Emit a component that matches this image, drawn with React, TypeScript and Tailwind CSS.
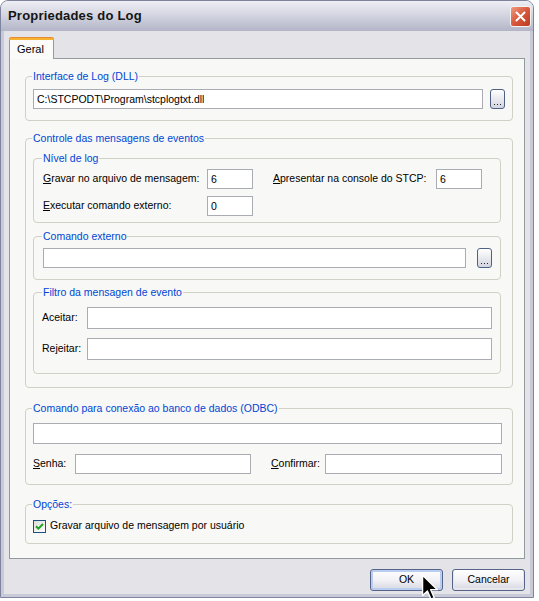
import React from "react";

function Input({ className = "", value = "" }: { className?: string; value?: string }) {
  return (
    <div
      className={
        "bg-white border border-[#a9adb3] flex items-center pl-[3px] leading-none whitespace-nowrap overflow-hidden " +
        className
      }
    >
      {value}
    </div>
  );
}

function Browse() {
  return (
    <div className="shrink-0 w-[15px] h-[20px] rounded-[3px] border border-[#4d6185] bg-gradient-to-b from-white to-[#d3d5e0] flex items-end justify-center pb-[3px]">
      <svg width="7" height="1" viewBox="0 0 7 1">
        <rect x="0" y="0" width="1" height="1" fill="#222" />
        <rect x="3" y="0" width="1" height="1" fill="#222" />
        <rect x="6" y="0" width="1" height="1" fill="#222" />
      </svg>
    </div>
  );
}

function Group({
  label,
  legendClass = "ml-[6px]",
  className = "",
  children,
}: {
  label: string;
  legendClass?: string;
  className?: string;
  children?: React.ReactNode;
}) {
  return (
    <fieldset className={"border border-[#d0d0c4] rounded-[4px] min-w-0 " + className}>
      <legend className={"px-[1px] leading-[13px] text-[#0046d5] " + legendClass}>{label}</legend>
      {children}
    </fieldset>
  );
}

function Button({ label, def = false }: { label: string; def?: boolean }) {
  return (
    <div
      className={
        "w-[73px] h-[22px] rounded-[3px] border border-[#56648a] bg-gradient-to-b from-white via-[#f2f2f6] to-[#d6d7e1] flex items-center justify-center " +
        (def ? "shadow-[inset_0_0_0_2px_#b8cdf0]" : "shadow-[inset_0_-1px_0_1px_#e6e6ee]")
      }
    >
      {label}
    </div>
  );
}

export default function App() {
  return (
    <div className="w-[539px] h-[601px] bg-white relative font-['Liberation_Sans',Arial,sans-serif] text-[10.5px] text-black">
      <div className="w-[534px] h-[598px] flex flex-col rounded-t-[8px] border border-[#7f849e] bg-[#e4e3e8] overflow-hidden">
        {/* title bar */}
        <div className="h-[30px] shrink-0 flex items-center justify-between pl-[7px] pr-[2px] bg-gradient-to-b from-[#eeeef4] via-[#d2d3df] to-[#b3b5c8]">
          <span className="font-bold text-[13px] text-[#151515] tracking-[0.2px]">Propriedades do Log</span>
          <div className="w-[21px] h-[21px] rounded-[3px] border border-[#f4f4f4] bg-gradient-to-br from-[#ec9a80] via-[#d9573b] to-[#bb3a20] flex items-center justify-center">
            <svg width="11" height="11" viewBox="0 0 11 11">
              <path d="M1.5 1.5 L9.5 9.5 M9.5 1.5 L1.5 9.5" stroke="white" strokeWidth="2" strokeLinecap="round" />
            </svg>
          </div>
        </div>

        {/* body */}
        <div className="flex-1 flex flex-col border-x-[3px] border-b-[3px] border-[#c9cad8] pl-[5px] pr-[5px] pt-[6px]">
          {/* tabs */}
          <div className="flex h-[21px]">
            <div className="relative z-10 w-[45px] h-[22px] bg-[#fbfbfa] border-x border-[#919b9c] rounded-t-[3px] flex flex-col">
              <div className="h-[3px] -mx-[1px] rounded-t-[3px] bg-[#f7b232] border-t border-[#e68b2c]" />
              <div className="flex-1 pl-[7px] flex items-center text-[11px]">Geral</div>
            </div>
          </div>

          {/* panel */}
          <div className="w-[516px] border border-[#919b9c] bg-[#f8f8f6] pt-[11px] pl-[15px] pr-[11px] pb-[14px] flex flex-col">
            {/* Interface de Log */}
            <Group label="Interface de Log (DLL)">
              <div className="pl-[7px] pr-[7px] pb-[11px]">
                <div className="flex items-center gap-[7px] mt-[6px]">
                  <Input className="flex-1 h-[20px]" value="C:\STCPODT\Program\stcplogtxt.dll" />
                  <Browse />
                </div>
              </div>
            </Group>

            {/* Controle */}
            <Group label="Controle das mensagens de eventos" className="mt-[11px]">
              <div className="pl-[7px] pr-[11px] pb-[13px] flex flex-col">
                <Group label="Nível de log" legendClass="ml-[8px]" className="mt-[7px]">
                  <div className="pl-[9px] pb-[6px]">
                    <div className="flex items-center h-[20px] mt-[4px]">
                      <div className="w-[164px]">
                        <u>G</u>ravar no arquivo de mensagem:
                      </div>
                      <Input className="w-[46px] h-[20px]" value="6" />
                      <div className="w-[20px]" />
                      <div className="w-[163px]">
                        <u>A</u>presentar na console do STCP:
                      </div>
                      <Input className="w-[46px] h-[20px]" value="6" />
                    </div>
                    <div className="flex items-center h-[20px] mt-[7px]">
                      <div className="w-[164px]">
                        <u>E</u>xecutar comando externo:
                      </div>
                      <Input className="w-[46px] h-[20px]" value="0" />
                    </div>
                  </div>
                </Group>

                <Group label="Comando externo" legendClass="ml-[8px]" className="mt-[7px]">
                  <div className="pl-[9px] pr-[8px] pb-[11px]">
                    <div className="flex items-center gap-[11px] mt-[5px]">
                      <Input className="flex-1 h-[20px]" />
                      <Browse />
                    </div>
                  </div>
                </Group>

                <Group label="Filtro da mensagen de evento" legendClass="ml-[8px]" className="mt-[6px]">
                  <div className="pl-[8px] pr-[8px] pb-[13px]">
                    <div className="flex items-center mt-[8px]">
                      <div className="w-[45px]">Aceitar:</div>
                      <Input className="flex-1 h-[22px]" />
                    </div>
                    <div className="flex items-center mt-[9px]">
                      <div className="w-[45px]">Rejeitar:</div>
                      <Input className="flex-1 h-[22px]" />
                    </div>
                  </div>
                </Group>
              </div>
            </Group>

            {/* ODBC */}
            <Group label="Comando para conexão ao banco de dados (ODBC)" className="mt-[14px]">
              <div className="pl-[7px] pr-[10px] pb-[10px]">
                <Input className="w-full h-[21px] mt-[8px]" />
                <div className="flex items-center h-[20px] mt-[10px]">
                  <div className="w-[42px]">
                    <u>S</u>enha:
                  </div>
                  <Input className="w-[176px] h-[20px]" />
                  <div className="w-[20px]" />
                  <div className="w-[54px]">
                    <u>C</u>onfirmar:
                  </div>
                  <Input className="flex-1 h-[20px]" />
                </div>
              </div>
            </Group>

            {/* Opções */}
            <Group label="Opções:" className="mt-[13px]">
              <div className="pl-[7px] pb-[9px]">
                <div className="flex items-center gap-[4px] h-[16px] mt-[7px]">
                  <div className="w-[13px] h-[13px] border border-[#1c5180] bg-gradient-to-br from-[#dcdcd7] to-white flex items-center justify-center">
                    <svg width="9" height="9" viewBox="0 0 9 9">
                      <path d="M1 4.2 L3.4 6.6 L8 2" stroke="#21a121" strokeWidth="2" fill="none" />
                    </svg>
                  </div>
                  <span>Gravar arquivo de mensagem por usuário</span>
                </div>
              </div>
            </Group>
          </div>

          {/* buttons */}
          <div className="flex justify-end gap-[9px] mt-[10px]">
            <Button label="OK" def />
            <Button label="Cancelar" />
          </div>
        </div>
      </div>

      {/* mouse cursor */}
      <svg className="absolute left-[421px] top-[574px]" width="18" height="27" viewBox="0 0 13 20">
        <path
          d="M1 1 L1 16 L4.6 12.6 L7.2 18.6 L9.6 17.6 L7 11.6 L12 11.6 Z"
          fill="black"
          stroke="white"
          strokeWidth="1"
          strokeLinejoin="round"
        />
      </svg>
    </div>
  );
}
